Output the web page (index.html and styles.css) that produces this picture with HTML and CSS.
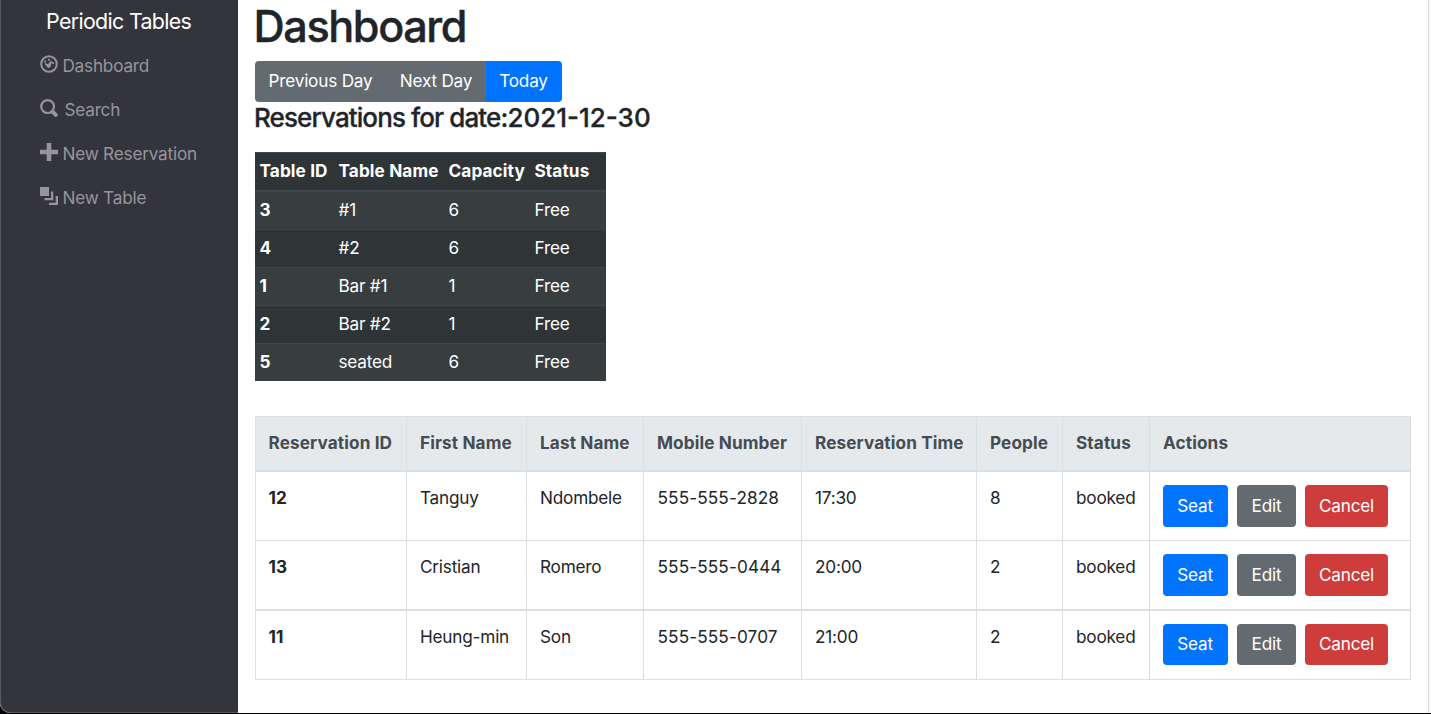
FILE: index.html
```html
<!DOCTYPE html>
<html lang="en">
<head>
<meta charset="utf-8">
<title>Periodic Tables</title>
<link rel="stylesheet" href="styles.css">
</head>
<body>
<div class="window">
  <nav class="sidebar">
    <div class="brand">Periodic Tables</div>
    <ul class="menu">
      <li><svg class="icon" viewBox="0 0 18 18"><circle cx="9" cy="9" r="7.8" fill="none" stroke="currentColor" stroke-width="2"/><circle cx="9" cy="4.8" r="1.1"/><circle cx="5.2" cy="6.6" r="1.1"/><circle cx="13" cy="8" r="1.1"/><path d="M4.9 8 8 9.2 11 5.6 12 6.4 10.9 10.5A2.2 2.2 0 0 1 7.3 12.2L4.6 9Z"/></svg><span>Dashboard</span></li>
      <li class="search"><svg class="icon" viewBox="0 0 18 18"><circle cx="7.6" cy="7.6" r="6.4" fill="none" stroke="currentColor" stroke-width="2.2"/><path d="M12.6 12.6 15.8 15.8" fill="none" stroke="currentColor" stroke-width="4" stroke-linecap="round"/></svg><span>Search</span></li>
      <li><svg class="icon" viewBox="0 0 18 18"><path d="M6.7 0h4.6v6.7H18v4.6h-6.7V18H6.7v-6.7H0V6.7h6.7Z"/></svg><span>New Reservation</span></li>
      <li><svg class="icon" viewBox="0 0 18 18"><path d="M0 0h9v9H0ZM11 4.5h2.3v8.8H4.5V11H11ZM15.7 9H18v9H9v-2.3h6.7Z"/></svg><span>New Table</span></li>
    </ul>
  </nav>
  <main class="content">
    <h1>Dashboard</h1>
    <div class="btn-group"><button class="btn gray prev">Previous Day</button><button class="btn gray next">Next Day</button><button class="btn blue today">Today</button></div>
    <h4>Reservations for date:<span class="date">2021-12-30</span></h4>
    <table class="tables">
      <colgroup><col class="t-id"><col class="t-name"><col class="t-cap"><col class="t-status"></colgroup>
      <thead><tr><th>Table ID</th><th>Table Name</th><th>Capacity</th><th>Status</th></tr></thead>
      <tbody>
        <tr><th>3</th><td>#1</td><td>6</td><td>Free</td></tr>
        <tr><th>4</th><td>#2</td><td>6</td><td>Free</td></tr>
        <tr><th>1</th><td>Bar #1</td><td>1</td><td>Free</td></tr>
        <tr><th>2</th><td>Bar #2</td><td>1</td><td>Free</td></tr>
        <tr><th>5</th><td>seated</td><td>6</td><td>Free</td></tr>
      </tbody>
    </table>
    <table class="reservations">
      <colgroup><col class="r-id"><col class="r-first"><col class="r-last"><col class="r-mobile"><col class="r-time"><col class="r-people"><col class="r-status"><col class="r-actions"></colgroup>
      <thead><tr><th>Reservation ID</th><th>First Name</th><th>Last Name</th><th>Mobile Number</th><th>Reservation Time</th><th>People</th><th>Status</th><th>Actions</th></tr></thead>
      <tbody>
        <tr><th>12</th><td>Tanguy</td><td>Ndombele</td><td class="phone">555-555-2828</td><td>17:30</td><td>8</td><td>booked</td><td><div class="actions"><button class="btn blue seat">Seat</button><button class="btn gray edit">Edit</button><button class="btn red cancel">Cancel</button></div></td></tr>
        <tr class="thick"><th>13</th><td>Cristian</td><td>Romero</td><td class="phone">555-555-0444</td><td>20:00</td><td>2</td><td>booked</td><td><div class="actions"><button class="btn blue seat">Seat</button><button class="btn gray edit">Edit</button><button class="btn red cancel">Cancel</button></div></td></tr>
        <tr class="last"><th>11</th><td>Heung-min</td><td>Son</td><td class="phone">555-555-0707</td><td>21:00</td><td>2</td><td>booked</td><td><div class="actions"><button class="btn blue seat">Seat</button><button class="btn gray edit">Edit</button><button class="btn red cancel">Cancel</button></div></td></tr>
      </tbody>
    </table>
  </main>
  <div class="scroll-track"></div>
</div>
</body>
</html>
```

FILE: styles.css
```css
* { box-sizing: border-box; }
body {
  margin: 0;
  height: 714px;
  overflow: hidden;
  background: #000;
  color: #212529;
  font: 17.2px/26px Inter, "Liberation Sans", sans-serif;
  letter-spacing: -0.21px;
}
.window {
  display: flex;
  height: 713px;
  background: #fff;
  border-bottom-left-radius: 10px;
  overflow: hidden;
}
.sidebar {
  flex: none;
  width: 238px;
  background: #34343c;
  border-left: 1px solid #56565d;
  border-bottom: 1px solid #56565d;
  border-bottom-left-radius: 10px;
  color: #96969a;
}
.brand { margin: 6px 0 0 45px; color: #fff; font-size: 21.4px; line-height: 30px; letter-spacing: -0.67px; }
.menu { list-style: none; margin: 8px 0 0; padding: 0 0 0 39.4px; }
.menu li { display: flex; align-items: flex-start; height: 44px; padding-top: 9px; gap: 4px; white-space: nowrap; }
.menu .search { gap: 6px; }
.icon { width: 18px; height: 18px; margin-top: 2px; fill: currentColor; flex: none; }
.content { flex: none; width: 1190px; padding-left: 17px; }
h1 { margin: 0 0 0 -1.5px; height: 61px; font-size: 43.2px; line-height: 52px; font-weight: 500; letter-spacing: -1.4px; -webkit-text-stroke: 0.4px currentColor; }
h4 { margin: 0 0 0 -1px; height: 50px; font-size: 26px; line-height: 31px; font-weight: 500; letter-spacing: -0.9px; -webkit-text-stroke: 0.3px currentColor; }
.date { letter-spacing: 0; }
.btn-group { display: flex; width: 307px; height: 41px; border-radius: 4px; overflow: hidden; }
.btn {
  padding: 0;
  border: 0;
  border-radius: 4px;
  color: #fff;
  font: inherit;
  letter-spacing: inherit;
  text-align: center;
  white-space: nowrap;
}
.btn-group .btn { border-radius: 0; padding-bottom: 2px; }
.prev { width: 131px; }
.next { width: 100px; }
.today { width: 76px; }
.gray { background: #636a70; }
.blue { background: #0073ff; }
.red { background: #cf3c3c; }
.btn.blue { padding-right: 1px; }
table { border-collapse: separate; border-spacing: 0; table-layout: fixed; }
th, td { text-align: left; vertical-align: top; white-space: nowrap; }
th { font-weight: 700; letter-spacing: 0.11px; }
.tables { width: 351px; background: #2f3437; color: #fff; }
.tables th, .tables td { height: 38px; padding: 5px 0 0 5.5px; border-top: 1px solid #40464c; }
.tables th:first-child { padding-left: 4.5px; }
.tables tbody tr:first-child > * { height: 39px; border-top-width: 2px; }
.tables tbody tr:nth-child(odd) { background: #383d40; }
.t-id { width: 78px; }
.t-name { width: 110px; }
.t-cap { width: 86px; }
.t-status { width: 77px; }
.reservations { width: 1156px; margin-top: 35px; border-left: 1px solid #dbdee2; }
.reservations th, .reservations td { height: 69px; padding: 13px 0 0 13px; border-right: 1px solid #dbdee2; border-bottom: 1px solid #dbdee2; }
.reservations th:first-child { padding-left: 12.5px; }
.reservations thead th { height: 56px; background: #e5e9ec; color: #464c53; border-top: 1px solid #dbdee2; border-bottom-width: 2px; }
.reservations .thick > * { height: 70px; border-bottom-width: 2px; }
.reservations .phone { padding-left: 13.5px; letter-spacing: 0.12px; }
.r-id { width: 151px; }
.r-first { width: 120px; }
.r-last { width: 117px; }
.r-mobile { width: 158px; }
.r-time { width: 175px; }
.r-people { width: 86px; }
.r-status { width: 87px; }
.r-actions { width: 261px; }
.actions { display: flex; gap: 9px; height: 42px; }
.last .actions { height: 41px; }
.last .btn { padding-bottom: 1px; }
.seat { width: 65px; }
.edit { width: 59px; }
.cancel { width: 83px; }
.scroll-track { flex: 1; background: #fafafa; border-left: 1px solid #dcdcdc; }
```
